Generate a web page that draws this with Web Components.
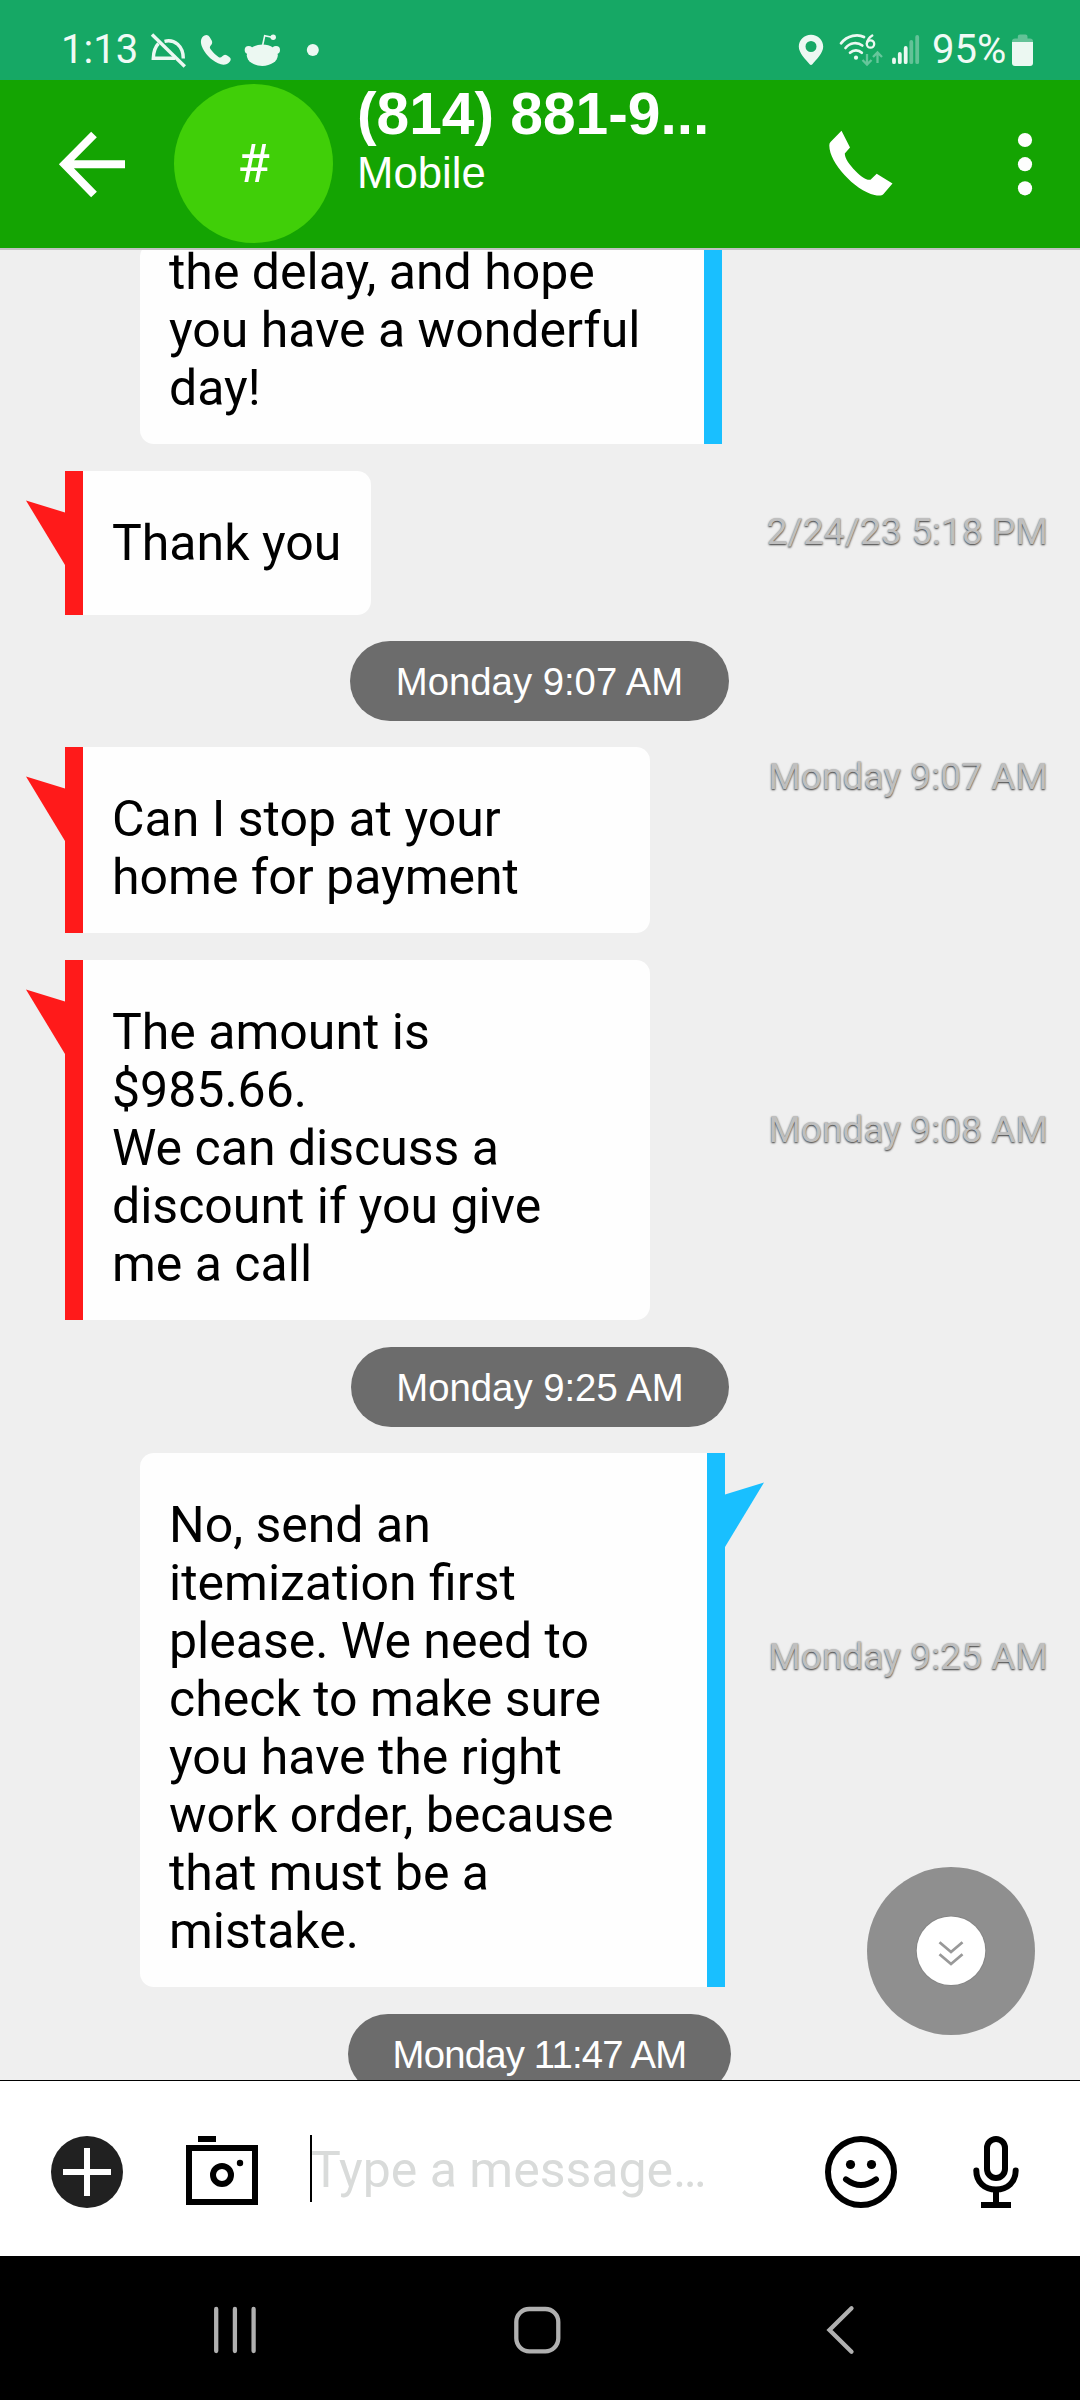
<!DOCTYPE html>
<html lang="en">
<head>
<meta charset="utf-8">
<title>Messages</title>
<style>
html,body{margin:0;padding:0;background:#000}
</style>
</head>
<body>
<chat-screen></chat-screen>
<script>
const define = (name, html) => customElements.define(name, class extends HTMLElement {
  constructor() {
    super();
    this.attachShadow({mode: 'open'});
  }
  connectedCallback() {
    this.shadowRoot.innerHTML = typeof html === 'function' ? html(this) : html;
  }
});

/* Each icon is [left, top, width, height, markup], drawn in screen units. */
const ICONS = {
  bellOff: [149, 0, 39, 80, '<g fill="none" stroke="#ecf8f2" stroke-width="3.4"><path d="M158.500 43.500C155 47 153.500 52 153.300 58.300H175M164.500 41.300C174.500 38.800 183.300 46 183.300 58.500"/><path d="M152 34.500 184.800 66.500"/></g>'],
  phoneSmall: [200, 0, 32, 80, '<path fill="#ecf8f2" d="M204.500 35.500C206.500 34.300 208.500 35.200 209.600 37L211.700 40.500C212.600 42.300 212.300 43.700 210.900 45.300C209.400 47 209.600 48 211 49.800C213.500 53 216 55.300 218.500 57C220 58 221 57.600 222.300 56.200C223.800 54.500 225.200 54.200 226.800 55.200L229.300 57C231 58.300 231.200 59.800 229.900 61.400C227 65 223 65.700 218 63.300C210.500 59.500 204.500 53.500 201.700 46C200.200 41.500 200.800 37.500 204.500 35.500Z"/>'],
  reddit: [243, 0, 40, 80, '<g fill="#ecf8f2"><ellipse cx="262.300" cy="55.300" rx="15.500" ry="10.700"/><circle cx="248.700" cy="50" r="4"/><circle cx="276" cy="50" r="4"/><circle cx="273.200" cy="37.300" r="2.700"/></g><path d="M262.700 45 264.700 35.700 272 37.200" fill="none" stroke="#ecf8f2" stroke-width="1.600"/>'],
  dot: [306, 0, 14, 80, '<circle cx="312.800" cy="50" r="6" fill="#ecf8f2"/>'],
  pin: [798, 0, 26, 80, '<path fill="#ecf8f2" fill-rule="evenodd" d="M811 34.700C817.800 34.700 823.200 39.900 823.200 46.500C823.200 53 816.500 59.500 812.400 64.200Q811 65.700 809.600 64.200C805.500 59.500 798.800 53 798.800 46.500C798.800 39.900 804.200 34.700 811 34.700ZM811 41A5.500 5.500 0 1 0 811 52A5.500 5.500 0 1 0 811 41Z"/>'],
  wifi: [838, 0, 46, 80, '<g fill="none" stroke="#ecf8f2" stroke-width="2.700" stroke-linecap="round"><path d="M841 43.300C847.500 35 858 33.800 864 37"/><path d="M845.500 48C850 42.300 857.500 41.800 862.300 45.500"/><path d="M850 52.700C853.500 49.500 858.500 49.500 861.800 52.700"/></g><circle cx="856" cy="57.700" r="2.100" fill="#ecf8f2"/><g fill="none" stroke="#ecf8f2" stroke-width="2.300" stroke-linecap="round"><circle cx="870.500" cy="44" r="3.700"/><path d="M872.300 35.500C869 37.500 867.200 40 866.900 43.500"/></g><g fill="none" stroke="#67c69b" stroke-width="2.300"><path d="M867 54V64M862.500 60 867 64.500 871.500 60M877.500 63V53M873 57 877.500 52.500 882 57"/></g>'],
  signal: [891, 0, 30, 80, '<g stroke-width="3.800" stroke-linecap="round"><g stroke="#ecf8f2"><path d="M894 59.500V62.200M899.800 54V62.200M905.700 48V62.200"/></g><g stroke="#63c297"><path d="M911.300 42V62.200M917.200 37V62.200"/></g></g>'],
  battery: [1011, 0, 23, 80, '<path fill="#63c297" d="M1017.800 36.500Q1017.800 34.500 1020 34.500H1025.500Q1027.500 34.500 1027.500 36.500V38.500H1030Q1033 38.500 1033 41.500V46H1012V41.500Q1012 38.500 1015 38.500H1017.800Z"/><path fill="#ecf8f2" d="M1012 42H1033V63Q1033 66 1030 66H1015Q1012 66 1012 63Z"/>'],
  back: [58, 80, 68, 168, '<path fill="none" stroke="#fff" stroke-width="8" d="M94 134.500 64.500 164.200 94 194.500M63 164.300H125"/>'],
  call: [828, 80, 66, 168, '<path fill="#fff" d="M841.500 130.800 850 147.500 844.800 153.500C844.600 158 849.500 165 855.500 171C861.500 177 867 180.700 870.500 179.700L876.700 173.700 892.500 183.500 883.500 194C882 195.700 879 196 874.500 195C865 193 852.500 184 844.500 175C835.500 165 829.500 155 829.300 145.500Q829.200 143.300 830.500 142Z"/>'],
  more: [1017, 80, 16, 168, '<g fill="#fdfefd"><circle cx="1025" cy="140" r="7.100"/><circle cx="1025" cy="164.200" r="7.100"/><circle cx="1025" cy="188.300" r="7.100"/></g>'],
  tailLeft: [26, 0, 39, 100, '<path fill="#ff1a1a" d="M26 29.500 65 41.500V94Z"/>'],
  tailRight: [725, 0, 39, 100, '<path fill="#19bfff" d="M764 29.500 725 41.500V94Z"/>'],
  down: [866, 1866, 170, 170, '<circle cx="951" cy="1951" r="84" fill="#8f8f8f"/><circle cx="951" cy="1950.700" r="35.300" fill="#858585"/><circle cx="951" cy="1950.700" r="34.300" fill="#fff"/><path fill="none" stroke="#999" stroke-width="2.800" d="M939.500 1942.300 951 1952 962.500 1942.300M939.500 1954.300 951 1964 962.500 1954.300"/>'],
  plus: [51, 2081, 72, 175, '<circle cx="87" cy="2172" r="36" fill="#212121"/><path stroke="#fff" stroke-width="6" d="M63 2172H111M87 2148V2196"/>'],
  camera: [186, 2081, 72, 175, '<path d="M198 2136H216V2142H198Z"/><rect x="189" y="2148" width="66" height="54" fill="none" stroke="#000" stroke-width="6"/><circle cx="222" cy="2175" r="9" fill="none" stroke="#000" stroke-width="6"/><circle cx="240" cy="2163" r="3.200"/>'],
  smile: [825, 2081, 72, 175, '<circle cx="861" cy="2172" r="33" fill="none" stroke="#000" stroke-width="6"/><circle cx="850.500" cy="2164.500" r="4.600"/><circle cx="871.500" cy="2164.500" r="4.600"/><path d="M846 2179.300Q861 2190.700 876 2179.300" fill="none" stroke="#000" stroke-width="6" stroke-linecap="round"/>'],
  mic: [972, 2081, 48, 175, '<g fill="none" stroke="#000" stroke-width="6"><rect x="987" y="2139" width="18" height="39" rx="9"/><path stroke-linecap="round" d="M976.300 2170.500C976.300 2182 984.500 2189.500 996 2189.500S1015.700 2182 1015.700 2170.500"/><path d="M996 2190V2205M981 2205H1011"/></g>'],
  recents: [213, 2256, 44, 144, '<path stroke="#b0b0b0" stroke-width="4.300" stroke-linecap="round" d="M216.200 2309V2351M234.900 2309V2351M253.600 2309V2351"/>'],
  home: [513, 2256, 50, 144, '<rect x="516.300" y="2309" width="42" height="42.300" rx="13" fill="none" stroke="#b0b0b0" stroke-width="4.300"/>'],
  navBack: [826, 2256, 30, 144, '<path fill="none" stroke="#b0b0b0" stroke-width="4.300" stroke-linecap="round" d="M851.500 2308.300 829.500 2330 851.500 2351.700"/>'],
};

define('ui-icon', el => {
  const [x, y, w, h, body] = ICONS[el.getAttribute('name')];
  return `<style>:host{display:block;flex:none;width:${w}px;height:${h}px}svg{display:block}</style>
  <svg width="${w}" height="${h}" viewBox="${x} ${y} ${w} ${h}" aria-hidden="true">${body}</svg>`;
});

define('status-bar', `<style>
:host{display:flex;height:80px;background:#16a865;color:#f0faf5;font:40px/60px Roboto,sans-serif;box-sizing:border-box;padding-left:61px}
.time{width:88px}.pct{width:80px;margin-left:11px}
.time,.pct{padding-top:20px;height:60px;white-space:nowrap}
</style>
<div class="time"><slot name="time"></slot></div>
<ui-icon name="bellOff"></ui-icon>
<ui-icon name="phoneSmall" style="margin-left:12px"></ui-icon>
<ui-icon name="reddit" style="margin-left:11px"></ui-icon>
<ui-icon name="dot" style="margin-left:23px"></ui-icon>
<ui-icon name="pin" style="margin-left:478px"></ui-icon>
<ui-icon name="wifi" style="margin-left:14px"></ui-icon>
<ui-icon name="signal" style="margin-left:7px"></ui-icon>
<div class="pct"><slot name="battery"></slot></div>
<ui-icon name="battery" style="margin-left:-1px"></ui-icon>`);

define('chat-header', `<style>
:host{display:flex;height:168px;background:#14a402;border-bottom:2px solid #c2c2c2;color:#fff;padding-left:58px}
.avatar{flex:none;width:159px;height:159px;margin:4px 0 0 48px;border-radius:50%;background:#40cf08;font:53px/160px Roboto,sans-serif;text-align:center}
.who{width:450px;margin-left:24px;padding-top:1px;font-family:"Liberation Sans",sans-serif;white-space:nowrap}
.title{font-size:58.700px;font-weight:700;line-height:66px}
.sub{margin-top:1px;font-size:43.700px;line-height:50px}
</style>
<ui-icon name="back"></ui-icon>
<div class="avatar">#</div>
<div class="who"><div class="title"><slot name="title"></slot></div><div class="sub"><slot name="kind"></slot></div></div>
<ui-icon name="call" style="margin-left:21px"></ui-icon>
<ui-icon name="more" style="margin-left:123px"></ui-icon>`);

define('chat-message', el => {
  const out = el.hasAttribute('outgoing');
  return `<style>
:host{display:flex;align-items:flex-start;box-sizing:border-box;width:1080px;padding-right:32px;padding-left:${out ? 140 : 26}px}
.bubble{display:flex;align-items:stretch;flex:none}
.bar{width:18px;background:${out ? '#19bfff' : '#ff1a1a'}}
.text{box-sizing:border-box;width:var(--w);min-height:var(--min,0);padding:var(--pt,43px) 0 27px 29px;background:#fefefe;color:#000;
 border-radius:${out ? '14px 0 0 14px' : '0 14px 14px 0'};font:50px/58px Roboto,sans-serif;white-space:nowrap}
time{margin-left:auto;margin-top:var(--t);font:37.200px/46px Roboto,sans-serif;color:#bfbfbf;text-shadow:0 1px 2px #333;white-space:nowrap}
</style>
${out ? '' : '<ui-icon name="tailLeft"></ui-icon>'}
<div class="bubble">${out ? '' : '<div class="bar"></div>'}<div class="text"><slot></slot></div>${out ? '<div class="bar"></div>' : ''}</div>
${out && !el.hasAttribute('no-tail') ? '<ui-icon name="tailRight"></ui-icon>' : ''}
${el.hasAttribute('time') ? `<time>${el.getAttribute('time')}</time>` : ''}`;
});

define('date-pill', `<style>
:host{display:block;box-sizing:border-box;flex:none;width:var(--w);height:80px;margin-left:var(--x);padding-top:1px;border-radius:40px;background:#6c6c6c;color:#fff;
font:38.300px/80px "Liberation Sans",sans-serif;text-align:center;white-space:nowrap}
</style><slot></slot>`);

define('message-list', `<style>
:host{display:flex;flex-direction:column;height:1830px;overflow:hidden;background:#efefef}
</style><slot></slot>`);

define('message-composer', `<style>
:host{display:flex;box-sizing:border-box;height:176px;border-top:1px solid #000;background:#fff;padding-left:51px}
.field{width:513px;margin-left:52px;padding-top:54px;display:flex;align-items:flex-start}
.caret{width:2px;height:67px;background:#000}
.hint{margin-left:-1px;font:50px/70px Roboto,sans-serif;color:#d9dbda;white-space:nowrap}
</style>
<ui-icon name="plus"></ui-icon>
<ui-icon name="camera" style="margin-left:63px"></ui-icon>
<div class="field"><div class="caret"></div><div class="hint"><slot></slot></div></div>
<ui-icon name="smile" style="margin-left:2px"></ui-icon>
<ui-icon name="mic" style="margin-left:75px"></ui-icon>`);

define('nav-bar', `<style>
:host{display:flex;height:144px;background:#000;padding-left:213px}
</style>
<ui-icon name="recents"></ui-icon>
<ui-icon name="home" style="margin-left:256px"></ui-icon>
<ui-icon name="navBack" style="margin-left:263px"></ui-icon>`);

define('chat-screen', `<style>
:host{display:block;position:relative;width:1080px;height:2400px;overflow:hidden}
.down{position:absolute;left:866px;top:1866px}
</style>
<status-bar><span slot="time">1:13</span><span slot="battery">95%</span></status-bar>
<chat-header><span slot="title">(814) 881-9...</span><span slot="kind">Mobile</span></chat-header>
<message-list>
<chat-message outgoing no-tail style="--w:564px;--pt:0px;margin-top:-7px;margin-bottom:27px">the delay, and hope<br>you have a wonderful<br>day!</chat-message>
<chat-message time="2/24/23 5:18 PM" style="--w:287.500px;--min:144px;--t:37px;margin-bottom:26px">Thank you</chat-message>
<date-pill style="--w:379px;--x:350px;margin-bottom:26px">Monday 9:07 AM</date-pill>
<chat-message time="Monday 9:07 AM" style="--w:567px;--t:6px;margin-bottom:27px">Can I stop at your<br>home for payment</chat-message>
<chat-message time="Monday 9:08 AM" style="--w:567px;--t:146px;margin-bottom:27px">The amount is<br>$985.66.<br>We can discuss a<br>discount if you give<br>me a call</chat-message>
<date-pill style="--w:378px;--x:351px;margin-bottom:26px">Monday 9:25 AM</date-pill>
<chat-message outgoing time="Monday 9:25 AM" style="--w:567px;--t:180px;margin-bottom:27px">No, send an<br>itemization first<br>please. We need to<br>check to make sure<br>you have the right<br>work order, because<br>that must be a<br>mistake.</chat-message>
<date-pill style="--w:383px;--x:348px;letter-spacing:-.8px">Monday 11:47 AM</date-pill>
</message-list>
<message-composer>Type a message…</message-composer>
<nav-bar></nav-bar>
<ui-icon class="down" name="down"></ui-icon>`);
</script>
</body>
</html>
